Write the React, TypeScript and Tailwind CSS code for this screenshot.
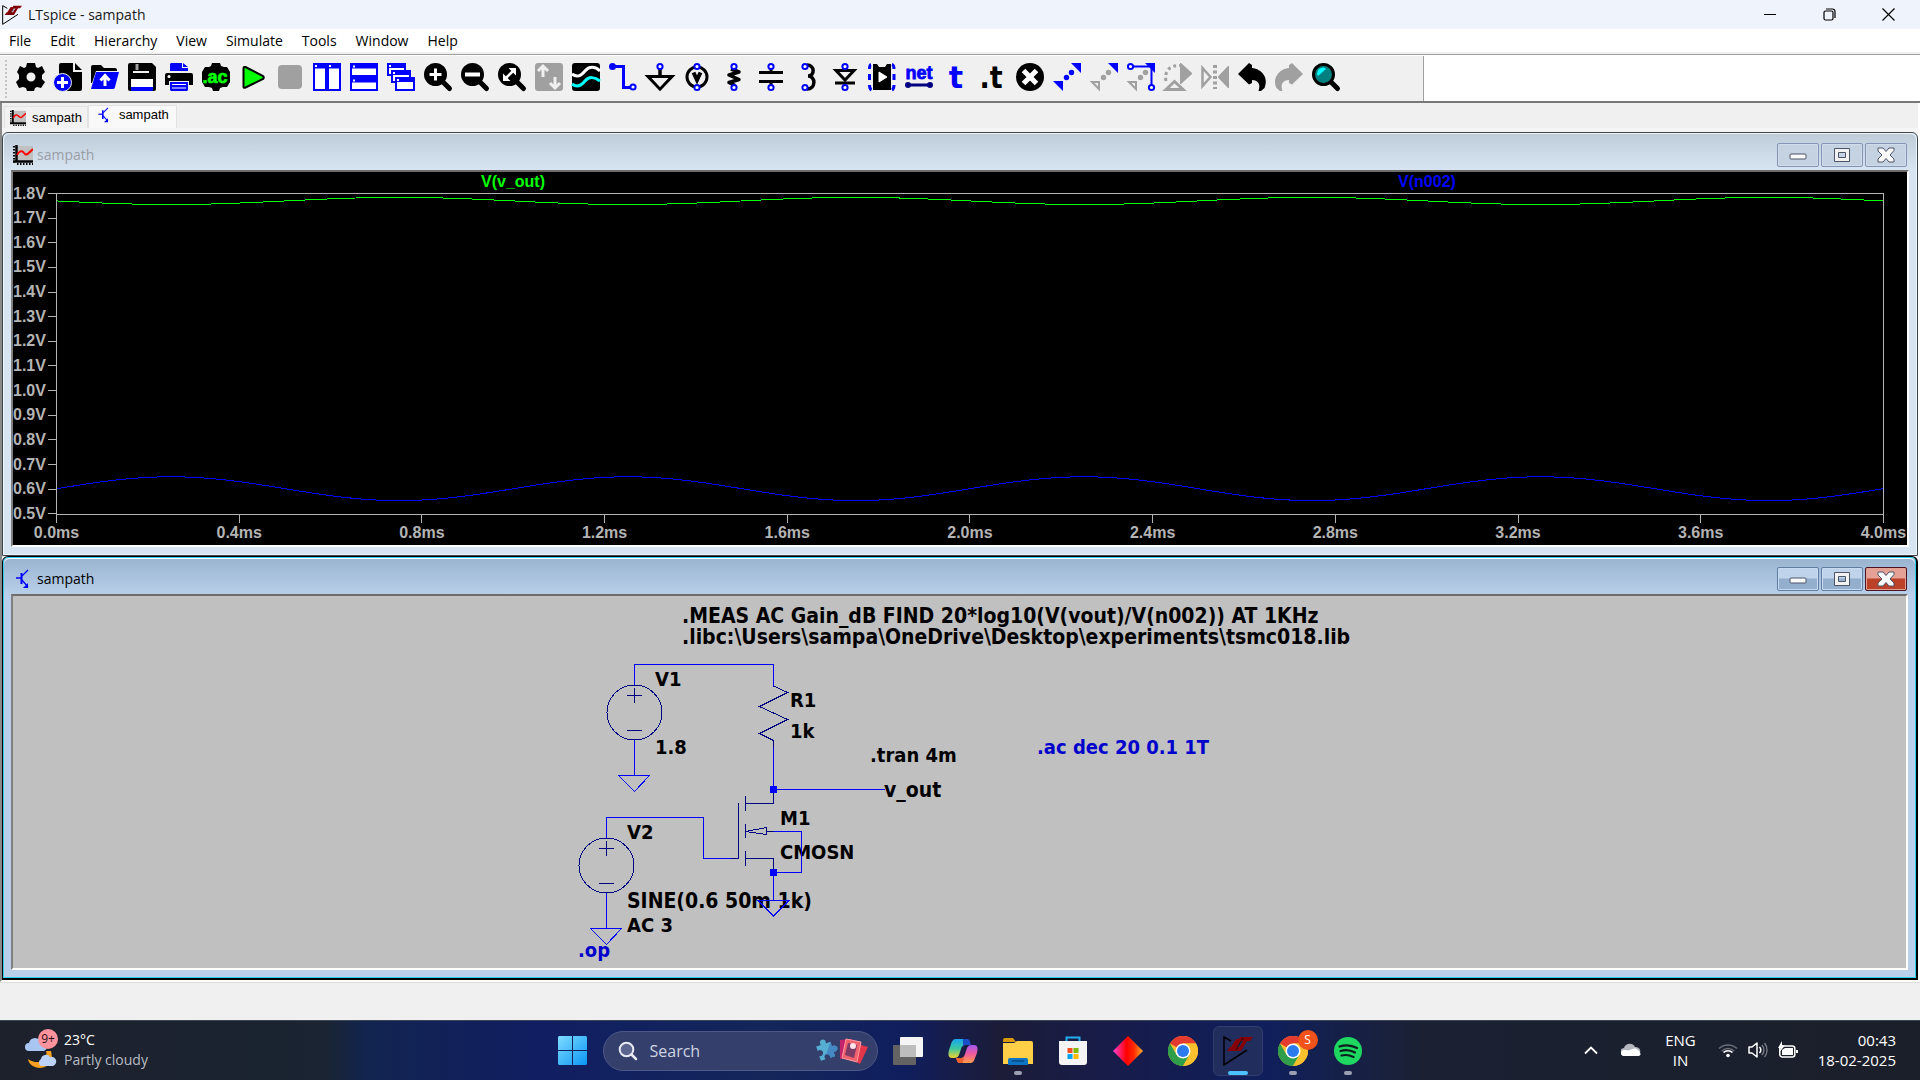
import type { ReactNode } from 'react';

const UI = "font-['Open_Sans','Noto_Sans',sans-serif]";

/* ---------- toolbar icons (28 x 28) ---------- */

const BLUE = '#0000ff';
const GRAY = '#a0a0a0';

function Ring({ x, y }: { x: number; y: number }) {
  return <circle cx={x} cy={y} r="2.6" fill="#fff" stroke={BLUE} strokeWidth="2" />;
}

function Lens({ fill = '#000' }: { fill?: string }) {
  return (
    <>
      <path d="M18 18 25.500 25.500" stroke="#000" strokeWidth="5" strokeLinecap="round" />
      <circle cx="11.500" cy="11.500" r="10" fill={fill} stroke="#000" strokeWidth="3" />
    </>
  );
}

const undoPath =
  'M0 11 L11 0 L14 2 L14 5 C24 6 31 15 26.500 25 L23 28 L20.500 28 C23 21 20 17 14 17 L14 20 L11 21.500 Z';

const tools: { name: string; icon: ReactNode }[] = [
  {
    name: 'Control panel',
    icon: (
      <path
        fillRule="evenodd"
        d="M10 0h8l1 4 2 1 4-2 3 6-3 3v4l3 3-4 6-4-1-2 1-1 3h-7l-1-3-3-1-4 1-3-6 3-3v-4L0 9l3-6 4 2 2-1zM14 9.500a4.500 4.500 0 1 0 0 9 4.500 4.500 0 0 0 0-9z"
      />
    ),
  },
  {
    name: 'New schematic',
    icon: (
      <>
        <path d="M7 0h12v9h9v17a2 2 0 0 1-2 2H5V2a2 2 0 0 1 2-2zM21 0l7 7h-7z" />
        <circle cx="8.500" cy="19.500" r="9" fill={BLUE} stroke="#f0f0f0" strokeWidth="1" />
        <path d="M8.500 14v11M3 19.500h11" stroke="#fff" strokeWidth="3" />
      </>
    ),
  },
  {
    name: 'Open',
    icon: (
      <>
        <path d="M0 4a2 2 0 0 1 2-2h8l3 3h11a2 2 0 0 1 2 2v1H5L1 20H0z" />
        <path d="M5 9h23l-4 15a2 2 0 0 1-2 2H0z" fill={BLUE} />
        <path d="M14 23v-8M9.500 17.500 14 12.500l4.500 5" stroke="#fff" strokeWidth="3" fill="none" />
      </>
    ),
  },
  {
    name: 'Save',
    icon: (
      <>
        <path d="M2 0h22l4 4v22a2 2 0 0 1-2 2H2a2 2 0 0 1-2-2V2a2 2 0 0 1 2-2z" />
        <path d="M5 0h16v10H5z" fill="#f0f0f0" />
        <path d="M5 0h16v8H5z" />
        <path d="M7.500 1h3v6h-3z" fill="#a0a0a0" />
        <path d="M3 16h22v8H3z" fill="#fff" />
        <path d="M3 24h22v4H3z" fill={BLUE} />
      </>
    ),
  },
  {
    name: 'Print',
    icon: (
      <>
        <path d="M5 8V1l1-1h11v5h6v3zM18 0l5 4h-5z" fill={BLUE} />
        <path d="M2 10h24a2 2 0 0 1 2 2v10h-4v-4H4v4H0V12a2 2 0 0 1 2-2z" />
        <circle cx="4" cy="13.500" r="1.500" fill="#fff" />
        <path d="M5 19h18v8l-1 1H6l-1-1z" fill={BLUE} />
        <path d="M7 21.500h14M7 25h14" stroke="#fff" strokeWidth="1" />
      </>
    ),
  },
  {
    name: 'Edit simulation command',
    icon: (
      <>
        <path d="M10 0h8l1 3 3 1 3 0 3 5v10l-3 5h-4l-3 1-1 3h-6l-1-3-3-1H3l-3-5V9l3-5h4l2-1z" />
        <text
          x="13"
          y="20"
          textAnchor="middle"
          className="font-['Liberation_Sans',Arial,sans-serif] text-[18px] font-bold"
          fill="#00ff00"
          stroke="#00ff00"
          strokeWidth="0.700"
        >
          .ac
        </text>
      </>
    ),
  },
  {
    name: 'Run',
    icon: <path d="M4.500 5.500v18q0 2 2 1L24 16q1.500-1.500 0-3L6.500 4q-2-.5-2 1.500z" fill="#00ff00" stroke="#000" strokeWidth="2" />,
  },
  { name: 'Halt', icon: <rect x="2" y="2" width="24" height="24" rx="4" fill={GRAY} /> },
  {
    name: 'Tile vertically',
    icon: (
      <g stroke={BLUE} strokeWidth="2" fill="#fff">
        <path d="M1 1h12v26H1zM15 1h12v26H15z" />
        <path d="M2 3h10M16 3h10" strokeWidth="5" />
        <path d="M2 3h2M16 3h2" stroke="#fff" />
      </g>
    ),
  },
  {
    name: 'Tile horizontally',
    icon: (
      <g stroke={BLUE} strokeWidth="2" fill="#fff">
        <path d="M1 1h26v12H1zM1 15h26v12H1z" />
        <path d="M2 3h24M2 17h24" strokeWidth="5" />
        <path d="M3 3.500h2M3 17.500h2" stroke="#fff" />
      </g>
    ),
  },
  {
    name: 'Cascade',
    icon: (
      <g stroke={BLUE} strokeWidth="2" fill="#fff">
        <path d="M1 1h17v11H1z" />
        <path d="M1 3h17" strokeWidth="4" />
        <path d="M5 8h18v11H5z" />
        <path d="M5 10h18" strokeWidth="4" />
        <path d="M9 15h18v12H9z" />
        <path d="M9 17h18" strokeWidth="4" />
        <path d="M2 3h2M6 10h2M10 17h2" stroke="#fff" />
      </g>
    ),
  },
  {
    name: 'Zoom in',
    icon: (
      <>
        <Lens />
        <path d="M11.500 5.500v12M5.500 11.500h12" stroke="#fff" strokeWidth="3" />
      </>
    ),
  },
  {
    name: 'Zoom out',
    icon: (
      <>
        <Lens />
        <path d="M4 11.500h15" stroke="#fff" strokeWidth="4" />
      </>
    ),
  },
  {
    name: 'Zoom to fit',
    icon: (
      <>
        <Lens />
        <path d="M8 15l7-7" stroke="#fff" strokeWidth="2.500" />
        <path d="M10.500 5h7.500v7.500zM5 10.500V18h7.500z" fill="#fff" />
      </>
    ),
  },
  {
    name: 'Autorange',
    icon: (
      <>
        <rect width="28" height="28" rx="3" fill={GRAY} />
        <path d="M8 14V4M3 8l5-5 5 5M20 14v10M15 20l5 5 5-5" stroke="#f0f0f0" strokeWidth="3" fill="none" />
      </>
    ),
  },
  {
    name: 'Pick visible traces',
    icon: (
      <>
        <rect width="28" height="28" rx="3" />
        <path d="M0 11c5 4 9 2 13-3s10-5 15 0" stroke="#fff" strokeWidth="3" fill="none" />
        <path d="M0 21c5 4 9 2 13-3s10-4 15 0" stroke="#00ffff" strokeWidth="3" fill="none" />
      </>
    ),
  },
  {
    name: 'Wire',
    icon: (
      <>
        <path d="M3 3.500h11.500v21H24" stroke={BLUE} strokeWidth="3" fill="none" />
        <circle cx="3.500" cy="3.500" r="3.500" fill={BLUE} />
        <Ring x={24} y={24} />
      </>
    ),
  },
  {
    name: 'Ground',
    icon: (
      <>
        <path d="M14 5v9M2 13.500h24L14 26z" stroke="#000" strokeWidth="3" fill="#f0f0f0" />
        <path d="M14 5v8" stroke="#000" strokeWidth="3" />
        <path d="M6 15h16l-8 9z" fill="#f0f0f0" />
        <Ring x={14} y={3.500} />
      </>
    ),
  },
  {
    name: 'Voltage source',
    icon: (
      <>
        <circle cx="14" cy="14" r="10" fill="none" stroke="#000" strokeWidth="3" />
        <path d="M10.500 9.500 14 17 17.500 9.500" stroke="#000" strokeWidth="4" fill="none" />
        <Ring x={14} y={3.500} />
        <Ring x={14} y={24.500} />
      </>
    ),
  },
  {
    name: 'Resistor',
    icon: (
      <>
        <path d="M11 6 19 9 9 12l10 4.500-10 3 6 3" stroke="#000" strokeWidth="3.500" fill="none" strokeLinejoin="round" />
        <Ring x={14} y={3.500} />
        <Ring x={14} y={24.500} />
      </>
    ),
  },
  {
    name: 'Capacitor',
    icon: (
      <>
        <path d="M2 9.500h24M2 18.500h24M14 5v4M14 19v5" stroke="#000" strokeWidth="3" />
        <Ring x={14} y={3.500} />
        <Ring x={14} y={24.500} />
      </>
    ),
  },
  {
    name: 'Inductor',
    icon: (
      <>
        <path d="M13 2c8 0 8 11 1 11c8 0 8 13-1 13" stroke="#000" strokeWidth="3.500" fill="none" />
        <Ring x={11} y={3.500} />
        <Ring x={11} y={24.500} />
      </>
    ),
  },
  {
    name: 'Diode',
    icon: (
      <>
        <path d="M5 7.500h18L14 17z" stroke="#000" strokeWidth="3" fill="#f0f0f0" />
        <path d="M4 20h20" stroke="#000" strokeWidth="3" />
        <Ring x={14} y={3.500} />
        <Ring x={14} y={24.500} />
      </>
    ),
  },
  {
    name: 'Component',
    icon: (
      <>
        <path d="M3 1.500Q1.500 2 1.500 6M1.500 11v6M1.500 22q0 4 2 5M24 1.500q2 .5 2 4.500M26 11v6M26 22q0 4-2 5" stroke={BLUE} strokeWidth="3" fill="none" />
        <path d="M5 1h4l2 3h6l2-3h4v26H5z" />
        <path d="M11 9v10l8-5z" fill="#fff" stroke="#fff" strokeWidth="1" />
      </>
    ),
  },
  {
    name: 'Label net',
    icon: (
      <>
        <text
          x="14"
          y="16"
          textAnchor="middle"
          className="font-['Liberation_Sans',Arial,sans-serif] text-[18px] font-bold"
          fill={BLUE}
          stroke={BLUE}
          strokeWidth="0.800"
        >
          net
        </text>
        <path d="M3 22h22" stroke="#000080" strokeWidth="3" />
        <circle cx="3" cy="22" r="3" fill="#000080" />
        <circle cx="25" cy="22" r="3" fill="#000080" />
      </>
    ),
  },
  {
    name: 'Text',
    icon: (
      <text x="14" y="25" textAnchor="middle" className="font-['DejaVu_Sans',sans-serif] text-[30px] font-bold" fill={BLUE}>
        t
      </text>
    ),
  },
  {
    name: 'SPICE directive',
    icon: (
      <text x="12" y="25" textAnchor="middle" className="font-['DejaVu_Sans_Condensed',sans-serif] text-[30px] font-bold">
        .t
      </text>
    ),
  },
  {
    name: 'Delete',
    icon: (
      <>
        <circle cx="14" cy="14" r="14" />
        <path d="M7.500 7.500l13 13M20.500 7.500l-13 13" stroke="#fff" strokeWidth="5" />
      </>
    ),
  },
  {
    name: 'Move',
    icon: (
      <g fill={BLUE}>
        <path d="M18 0h10v10zM0 18h10v10z" />
        <circle cx="18.500" cy="9.500" r="2.700" />
        <circle cx="13.500" cy="14.500" r="2.700" />
      </g>
    ),
  },
  {
    name: 'Drag',
    icon: (
      <>
        <path d="M18 0h10v10z" fill={BLUE} />
        <circle cx="18.500" cy="9.500" r="2.700" fill={GRAY} />
        <circle cx="13.500" cy="14.500" r="2.700" fill={GRAY} />
        <path d="M2 19h7v7z" fill="none" stroke={GRAY} strokeWidth="2" />
      </>
    ),
  },
  {
    name: 'Stretch',
    icon: (
      <>
        <path d="M4 3.500h20.500V24" fill="none" stroke={BLUE} strokeWidth="2" />
        <path d="M18 0h10v10z" fill={BLUE} />
        <circle cx="18.500" cy="9.500" r="2.700" fill={GRAY} />
        <circle cx="13.500" cy="14.500" r="2.700" fill={GRAY} />
        <path d="M2 19h7v7z" fill="none" stroke={GRAY} strokeWidth="2" />
        <Ring x={3.500} y={3.500} />
        <Ring x={24.500} y={24.500} />
      </>
    ),
  },
  {
    name: 'Rotate',
    icon: (
      <>
        <path d="M2 18C0 8 6 2 16 2.500" fill="none" stroke={GRAY} strokeWidth="3" strokeDasharray="3 3" />
        <path d="M16 0h1l11 10v1L17 21h-1z" fill={GRAY} />
        <path d="M2 26.500 10.500 18.500 19 26.500z" fill="#f0f0f0" stroke={GRAY} strokeWidth="3" />
      </>
    ),
  },
  {
    name: 'Mirror',
    icon: (
      <>
        <path d="M1.500 5v18l8-9z" fill="none" stroke={GRAY} strokeWidth="2.500" />
        <path d="M28 3v22h-1L17 14.500v-1L27 3z" fill={GRAY} />
        <path d="M14 2v24" stroke={GRAY} strokeWidth="4" strokeDasharray="3 2.500" />
      </>
    ),
  },
  { name: 'Undo', icon: <path d={undoPath} /> },
  { name: 'Redo', icon: <path d={undoPath} fill={GRAY} transform="translate(28 0) scale(-1 1)" /> },
  {
    name: 'Find',
    icon: (
      <>
        <Lens fill="#008080" />
        <path d="M5 11a6.500 6.500 0 0 1 7-6.500l2 1.500-8 7z" fill="#00ffff" />
      </>
    ),
  },
];

/* ---------- small shared icons ---------- */

function LtLogo({ className }: { className: string }) {
  return (
    <svg viewBox="0 0 30 30" className={className} aria-hidden="true">
      <path d="M8 5 1 1v28L24 14" fill="none" stroke="#000" strokeWidth="1.500" />
      <path d="M13 3h6l-5 8h4l-3 4H4l3-4h1zM17 1h13l-3 4h-3l-6 10h-4l6-10h-5z" fill="#860008" />
      <path d="M20 2 13 14" stroke="#000" strokeWidth="1" strokeDasharray="2 1" />
    </svg>
  );
}

function WaveIcon({ className }: { className: string }) {
  return (
    <svg viewBox="0 0 20 20" className={className} aria-hidden="true">
      <path d="M5 1h15v14H5z" fill="#c0c0c0" />
      <path d="M3.500 0v17M0 16.500h20" stroke="#000" strokeWidth="2.500" />
      <path d="M1 1v17M4 19h16" stroke="#000" strokeWidth="2" strokeDasharray="1.500 1.500" />
      <path d="M4 10c2-4 5-5 7-2s4 1 9-4" fill="none" stroke="#f00" strokeWidth="2" />
    </svg>
  );
}

function TransistorIcon({ className }: { className: string }) {
  return (
    <svg viewBox="0 0 16 20" className={className} aria-hidden="true">
      <path d="M1 9h5" fill="none" stroke={BLUE} strokeWidth="1.500" />
      <path d="M6.500 4v11" stroke={BLUE} strokeWidth="2" />
      <path d="M7 7 13 1M7 11l6 7" fill="none" stroke={BLUE} strokeWidth="1.300" />
      <path d="M13 14v5H8z" fill={BLUE} />
    </svg>
  );
}

/* ---------- child windows ---------- */

function CaptionButtons({ active }: { active: boolean }) {
  const plain = active
    ? 'flex h-6 w-[42px] items-center justify-center rounded-[2px] border border-[#5f7da3] bg-linear-to-b from-[#bfd3ea] from-45% to-[#94aece] to-50% inset-ring inset-ring-[#c9dbf0]'
    : 'flex h-6 w-[42px] items-center justify-center rounded-[2px] border border-[#8494b5] bg-[#c4d2e2] inset-ring inset-ring-[#d0dcea]';
  const close = active
    ? 'flex h-6 w-[42px] items-center justify-center rounded-[2px] border border-[#4b1420] bg-linear-to-b from-[#e5a196] from-45% to-[#bc4129] to-50% inset-ring inset-ring-[#e3a296]'
    : plain;
  return (
    <div className="flex gap-0.5">
      <button aria-label="Minimize" className={plain}>
        <svg width="20" height="18" viewBox="0 0 20 18">
          <rect x="2" y="8" width="16" height="5" rx="1" fill="#fafafa" stroke="#4c5468" />
        </svg>
      </button>
      <button aria-label="Restore" className={plain}>
        <svg width="20" height="18" viewBox="0 0 20 18">
          <path fillRule="evenodd" d="M2.500 2.500h15v13h-15zM6.500 6.500v5h7v-5z" fill="#f2f2f2" stroke="#4c5468" />
        </svg>
      </button>
      <button aria-label="Close" className={close}>
        <svg width="20" height="18" viewBox="0 0 20 18">
          <path d="M2 2h5l3 3.500L13 2h5v2.500L14 9l4 4v3h-5l-3-3.500L7 16H2v-3l4-4-4-4z" fill="#fafafa" stroke="#4c5468" strokeLinejoin="round" />
        </svg>
      </button>
    </div>
  );
}

function ChildWindow({ active, icon, children }: { active: boolean; icon: ReactNode; children: ReactNode }) {
  return (
    <section
      className={
        active
          ? 'flex grow basis-0 flex-col rounded-t-md border-t border-r-2 border-b-2 border-l border-black bg-[#bad0ea] px-2 pb-2 inset-ring inset-ring-[#2bd0f0]'
          : 'flex grow basis-0 flex-col rounded-t-md border border-[#3f474c] bg-[#d7e4f2] px-2 pb-2 inset-ring inset-ring-[#eef3f8]'
      }
    >
      <header
        className={
          active
            ? 'mx-[-7px] mt-px flex h-9 items-center justify-between rounded-t-md border-t border-white bg-linear-to-b from-[#9ab4d0] to-[#b8cfe9] pt-[5px] pr-2 pl-[9px]'
            : 'mx-[-7px] mt-px flex h-9 items-center justify-between rounded-t-md bg-linear-to-b from-[#bfcddb] to-[#d7e4f2] px-[9px] pt-[6px]'
        }
      >
        <div className={active ? 'flex items-center gap-1 text-sm text-black' : 'flex items-center gap-1 text-sm text-[#9a9fa6]'}>
          {icon}
          <h2>sampath</h2>
        </div>
        <CaptionButtons active={active} />
      </header>
      <div className="flex flex-1 flex-col border-2 border-t-[#706c6c] border-r-white border-b-white border-l-[#808080]">{children}</div>
    </section>
  );
}

/* ---------- waveform plot ---------- */

function sine(center: number, amplitude: number) {
  let d = '';
  for (let x = 0; x <= 1828; x += 4) {
    const y = center - amplitude * Math.sin((2 * Math.PI * x) / 457);
    d += `${x === 0 ? 'M' : 'L'}${x} ${y.toFixed(2)}`;
  }
  return d;
}

const volts = ['1.8V', '1.7V', '1.6V', '1.5V', '1.4V', '1.3V', '1.2V', '1.1V', '1.0V', '0.9V', '0.8V', '0.7V', '0.6V', '0.5V'];
const times = ['0.0ms', '0.4ms', '0.8ms', '1.2ms', '1.6ms', '2.0ms', '2.4ms', '2.8ms', '3.2ms', '3.6ms', '4.0ms'];

function Plot() {
  return (
    <div className="grid flex-1 grid-cols-[43px_1fr] grid-rows-[21px_1fr_30px] bg-black pr-[23px] font-['Liberation_Sans',Arial,sans-serif] text-base leading-5 font-bold text-[#b4b4b4]">
      <div className="col-start-2 grid grid-cols-2 text-center">
        <span className="text-[#00ff00]">V(v_out)</span>
        <span className="text-[#0000ff]">V(n002)</span>
      </div>
      <div className="col-start-1 flex flex-col justify-between">
        {volts.map((v) => (
          <div key={v} className="flex h-px items-center justify-between">
            <span>{v}</span>
            <span className="h-px w-2 bg-[#b4b4b4]" />
          </div>
        ))}
      </div>
      <div className="relative border border-[#b4b4b4]">
        <svg viewBox="0 0 1828 322" preserveAspectRatio="none" className="absolute inset-0 size-full" shapeRendering="crispEdges" fill="none">
          <path d={sine(7, -3.6)} stroke="#00ff00" strokeWidth="1" vectorEffect="non-scaling-stroke" />
          <path d={sine(297, 12)} stroke="#0000ff" strokeWidth="1" vectorEffect="non-scaling-stroke" />
        </svg>
      </div>
      <div className="col-start-2 flex justify-between">
        {times.map((t) => (
          <div key={t} className="flex w-px flex-col items-center">
            <span className="h-2 w-px bg-[#b4b4b4]" />
            <span>{t}</span>
          </div>
        ))}
      </div>
    </div>
  );
}

/* ---------- schematic ---------- */

function VoltageSource({ x, y }: { x: number; y: number }) {
  return (
    <g transform={`translate(${x} ${y})`}>
      <circle cx="0" cy="0" r="27.500" stroke="#000080" />
      <path d="M-7.500-17H7.500M0-24.500V-9.500M-7.500 18H7.500" stroke="#000080" />
      <path d="M0 27.500V63" />
      <path d="M-16 63H15L0 79z" />
    </g>
  );
}

const labels: { x: number; y: number; text: string; blue?: boolean; large?: boolean }[] = [
  { x: 682, y: 623, text: '.MEAS AC Gain_dB FIND 20*log10(V(vout)/V(n002)) AT 1KHz', large: true },
  { x: 682, y: 644, text: '.libc:\\Users\\sampa\\OneDrive\\Desktop\\experiments\\tsmc018.lib', large: true },
  { x: 655, y: 686, text: 'V1' },
  { x: 655, y: 754, text: '1.8' },
  { x: 790, y: 707, text: 'R1' },
  { x: 790, y: 738, text: '1k' },
  { x: 870, y: 762, text: '.tran 4m' },
  { x: 1037, y: 754, text: '.ac dec 20 0.1 1T', blue: true },
  { x: 884, y: 797, text: 'v_out', large: true },
  { x: 780, y: 825, text: 'M1' },
  { x: 780, y: 859, text: 'CMOSN' },
  { x: 627, y: 839, text: 'V2' },
  { x: 627, y: 908, text: 'SINE(0.6 50m 1k)', large: true },
  { x: 627, y: 932, text: 'AC 3' },
  { x: 578, y: 957, text: '.op', blue: true },
];

function Schematic() {
  return (
    <div className="flex flex-1 bg-[#c0c0c0]">
      <svg className="min-h-[365px] w-full" aria-label="Common source amplifier schematic">
        <g transform="translate(-13 -596)">
          <g className="font-['DejaVu_Sans_Condensed','Noto_Sans',sans-serif] font-bold">
            {labels.map((l) => (
              <text key={l.text} x={l.x} y={l.y} fill={l.blue ? '#0000cc' : '#000'} className={l.large ? 'text-[21px]' : 'text-[20px]'}>
                {l.text}
              </text>
            ))}
          </g>
          <g fill="none" stroke="#0000ff" strokeWidth="1" shapeRendering="crispEdges">
            <VoltageSource x={634.5} y={712.5} />
            <VoltageSource x={606.5} y={865.5} />
            <path d="M634.500 685V664.500H773.500V686" />
            <path d="M606.500 838V817.500H703.500V858.500H731" />
            <path d="M773.500 686 787.500 692.500 759.500 706.500 787.500 719.500 759.500 733.500 773.500 740.500V747" stroke="#000080" />
            <path d="M773.500 747V789.500H885" />
            <path d="M773.500 789.500V803.500H745.500M745.500 796V811M738.500 803V858.500H731M745.500 824V838M745.500 831.500 766.500 827.500V834.500L745.500 831.500M766.500 831.500H774M745.500 851V866M745.500 858.500H773.500V872" stroke="#000080" />
            <path d="M774 831.500H801.500V872.500H773.500V900.500M758 900.500H789L773.500 916z" />
            <path d="M770 786h7v7h-7zM770 869h7v7h-7z" fill="#0000ff" stroke="none" />
          </g>
        </g>
      </svg>
    </div>
  );
}

/* ---------- taskbar ---------- */

function Chrome() {
  return (
    <svg viewBox="0 0 30 30" className="size-[30px]" aria-hidden="true">
      <circle cx="15" cy="15" r="15" fill="#fbc02d" />
      <path d="M15 15 2 7.500A15 15 0 0 1 28 7.500H15z" fill="#e53a2f" />
      <path d="M15 15 8.500 18.800 2 7.500A15 15 0 0 0 15 30l6.500-11.200z" fill="#2f9e4a" />
      <path d="M15 7.500h13A15 15 0 0 1 15 30l6.500-11.200z" fill="#fbc02d" />
      <circle cx="15" cy="15" r="7.500" fill="#fff" />
      <circle cx="15" cy="15" r="6" fill="#2b7bee" />
    </svg>
  );
}

const apps: { name: string; icon: ReactNode; state?: 'open' | 'active'; badge?: string }[] = [
  {
    name: 'Task view',
    icon: (
      <svg viewBox="0 0 30 30" className="size-[30px]">
        <rect x="0" y="9" width="23" height="20" rx="1" fill="#636363" />
        <rect x="7" y="1" width="23" height="20" rx="1" fill="#f5f5f5" />
        <path d="M7 9h16v12H7z" fill="#bdbdbd" />
      </svg>
    ),
  },
  {
    name: 'Copilot',
    icon: (
      <svg viewBox="0 0 30 30" className="size-[30px]">
        <defs>
          <linearGradient id="cpa" x1="0" y1="0" x2="0" y2="1">
            <stop offset="0" stopColor="#18a5f0" />
            <stop offset="0.5" stopColor="#3cc8a0" />
            <stop offset="1" stopColor="#f2d22e" />
          </linearGradient>
          <linearGradient id="cpb" x1="0" y1="0" x2="0" y2="1">
            <stop offset="0" stopColor="#a558f0" />
            <stop offset="0.5" stopColor="#f05a9c" />
            <stop offset="1" stopColor="#ff9d4a" />
          </linearGradient>
        </defs>
        <path d="M8 3h10c3 0 3 3 4 6h-5c-2 0-3 1-4 4l-2 6c-1 2-2 3-5 3H4c-4 0-4-4-3-8l2-6c1-3 2-5 5-5z" fill="url(#cpa)" />
        <path d="M15 3h4c3 0 3 3 4 6h-5c-1 0-2 0-3 2z" fill="#1a4fc8" />
        <path d="M22 27H12c-3 0-3-3-4-5h5c2 0 3-1 4-4l2-6c1-2 2-3 5-3h2c4 0 4 4 3 8l-2 5c-1 3-2 5-5 5z" fill="url(#cpb)" />
        <path d="M15 27h-3c-3 0-3-3-4-5h5c1 0 2 0 3-2z" fill="#f0602e" />
      </svg>
    ),
  },
  {
    name: 'File Explorer',
    state: 'open',
    icon: (
      <svg viewBox="0 0 30 30" className="size-[30px]">
        <path d="M0 4a2 2 0 0 1 2-2h8l3 4H0z" fill="#d99a05" />
        <path d="M0 7h11l3-2h14a2 2 0 0 1 2 2v21H0z" fill="#ffcf48" />
        <path d="M5 29v-5a2 2 0 0 1 2-2h16a2 2 0 0 1 2 2v5z" fill="#0d74c4" />
        <path d="M9 25h12" stroke="#0a4a86" strokeWidth="1.500" />
      </svg>
    ),
  },
  {
    name: 'Microsoft Store',
    icon: (
      <svg viewBox="0 0 30 30" className="size-[30px]">
        <path d="M8.500 6V1.500h13V6" fill="none" stroke="#23aef0" strokeWidth="2" />
        <path d="M1 5h28v21a3 3 0 0 1-3 3H4a3 3 0 0 1-3-3z" fill="#f4f4f4" />
        <path d="M9.500 12h5v5h-5z" fill="#f25022" />
        <path d="M15.500 12h5v5h-5z" fill="#7fba00" />
        <path d="M9.500 18h5v5h-5z" fill="#00a4ef" />
        <path d="M15.500 18h5v5h-5z" fill="#ffb900" />
      </svg>
    ),
  },
  {
    name: 'Diamond',
    icon: (
      <svg viewBox="0 0 30 30" className="size-[30px]">
        <defs>
          <linearGradient id="dia">
            <stop offset="0" stopColor="#ff40d8" />
            <stop offset="0.450" stopColor="#ff0000" />
            <stop offset="0.700" stopColor="#ff2a00" />
            <stop offset="1" stopColor="#ffb030" />
          </linearGradient>
        </defs>
        <path d="M15 0 30 15 15 30 0 15z" fill="url(#dia)" />
      </svg>
    ),
  },
  { name: 'Google Chrome', icon: <Chrome /> },
  { name: 'LTspice', state: 'active', icon: <LtLogo className="size-[30px]" /> },
  { name: 'Google Chrome, profile S', state: 'open', badge: 'S', icon: <Chrome /> },
  {
    name: 'Spotify',
    state: 'open',
    icon: (
      <svg viewBox="0 0 28 28" className="size-7">
        <circle cx="14" cy="14" r="14" fill="#1ed760" />
        <path d="M5.500 9.500c6-2 12-1.500 17.500 1.500M6.500 14c5-1.500 10-1 14.500 1.500M7.500 18.500c4-1 8-.5 12 1.500" fill="none" stroke="#0c1d1d" strokeWidth="2.200" strokeLinecap="round" />
      </svg>
    ),
  },
];

function Taskbar() {
  return (
    <footer className="grid h-[60px] grid-cols-[1fr_auto_1fr] items-center border-t border-[#3a4654] bg-[linear-gradient(90deg,#1d212c_0%,#1a2432_17%,#12244f_19%,#111e62_28%,#14265a_40%,#101e5e_47%,#1c1c38_52%,#171c4a_58%,#101f5c_66%,#1b2133_74%,#1b1f2a_100%)] text-sm text-white">
      <button className="flex items-center gap-1.5 pb-0.5 pl-6 text-left">
        <span className="relative">
          <svg width="34" height="38" viewBox="0 0 34 38" aria-hidden="true">
            <path d="M4 19a4 4 0 0 1 0-8 6 6 0 0 1 11-2 5 5 0 0 1 4 10z" fill="#a9c6f2" transform="translate(1 1)" />
            <path d="M22 20c3 9-8 15-18 8 1 8 13 12 20 6 5-4 4-10 3-14z" fill="#f5a01e" />
            <path d="M17 35a4 4 0 0 1 0-7 5 5 0 0 1 9-2 4.500 4.500 0 0 1 3 9z" fill="#bcd3f7" />
          </svg>
          <span className="absolute -top-0.5 right-0 flex size-5 items-center justify-center rounded-full bg-[#ff929c] text-xs text-[#2a1015]">9+</span>
        </span>
        <span className="leading-5">
          <span className="block">23°C</span>
          <span className="block text-[#b9bcc2]">Partly cloudy</span>
        </span>
      </button>

      <nav className="flex items-center gap-[5px]" aria-label="Taskbar">
        <button aria-label="Start" className="flex size-[50px] items-center justify-center">
          <svg viewBox="0 0 29 29" className="size-[29px]">
            <defs>
              <linearGradient id="win" x1="0" y1="0" x2="1" y2="1">
                <stop offset="0" stopColor="#7fdcff" />
                <stop offset="1" stopColor="#0a96f5" />
              </linearGradient>
            </defs>
            <path d="M1 0h13v14H0V1zM15 0h13l1 1v13H15zM0 15h14v14H1l-1-1zM15 15h14v13l-1 1H15z" fill="url(#win)" />
          </svg>
        </button>
        <label className="flex h-10 w-[275px] items-center rounded-full border border-[#4d5886] bg-[#343f6b] pr-2 pl-3.5">
          <svg width="20" height="20" viewBox="0 0 20 20" aria-hidden="true">
            <circle cx="8.500" cy="8.500" r="6.800" fill="#5b6590" stroke="#e8eaf2" strokeWidth="2" />
            <path d="M13.500 13.500 18 18" stroke="#e8eaf2" strokeWidth="2.500" strokeLinecap="round" />
          </svg>
          <input type="text" aria-label="Search" placeholder="Search" className="ml-3 w-0 flex-1 bg-transparent text-base text-white outline-none placeholder:text-[#d0d4e2]" />
          <svg width="54" height="30" viewBox="0 0 54 30" aria-hidden="true">
            <g transform="rotate(-18 10 15)">
              <path d="M3 8h5a3 3 0 1 1 5 0h5v5a3 3 0 1 1 0 5v5h-5a3 3 0 1 0-5 0H3v-5a3 3 0 1 0 0-5z" fill="#56aed2" />
              <path d="M18 8v5a3 3 0 1 1 0 5v5h-5a3 3 0 0 0-3-4z" fill="#4488c4" />
            </g>
            <path d="M25 4l12-1 4 18-16 2z" fill="#c4246c" />
            <path d="M43 8l10 3-8 17-10-5z" fill="#e2364b" />
            <path d="M31 3l15 3-4 20-15-4z" fill="#f0616e" stroke="#ff9a9f" strokeWidth="1" />
            <path d="M33 7l9 2-3 13-9-3z" fill="#7c3a66" />
            <circle cx="38" cy="10" r="3" fill="#ffe3e6" />
          </svg>
        </label>
        {apps.map((a) => (
          <button
            key={a.name}
            aria-label={a.name}
            className={
              a.state === 'active'
                ? 'relative flex size-[50px] items-center justify-center rounded-md border border-[#303c6c] bg-[#212d5c]'
                : 'relative flex size-[50px] items-center justify-center'
            }
          >
            {a.icon}
            {a.badge && (
              <span className="absolute top-1 right-0 flex size-5 items-center justify-center rounded-full bg-[#f1511b] text-xs text-white">{a.badge}</span>
            )}
            {a.state === 'open' && <span className="absolute bottom-px h-1 w-2 rounded-full bg-[#9a9fb2]" />}
            {a.state === 'active' && <span className="absolute bottom-0 h-1 w-5 rounded-full bg-[#4cc2ff]" />}
          </button>
        ))}
      </nav>

      <div className="flex items-center justify-end pr-6 pb-0.5">
        <button aria-label="Show hidden icons" className="mr-[22px]">
          <svg width="16" height="16" viewBox="0 0 16 16">
            <path d="M2 11.500 8 5.500l6 6" fill="none" stroke="#fff" strokeWidth="1.800" />
          </svg>
        </button>
        <button aria-label="OneDrive" className="mr-6">
          <svg width="20" height="14" viewBox="0 0 20 14">
            <path d="M4 13a4 4 0 0 1-1-8 6 6 0 0 1 11-1 4.500 4.500 0 0 1 5 6z" fill="#b4b7bd" />
            <path d="M3 13c-4 0-4-6 0-6 3 0 4 1 6 0s5-3 8 0 4 6-1 6z" fill="#fff" />
          </svg>
        </button>
        <button className="mr-[22px] text-center text-[15px] leading-5">
          <span className="block">ENG</span>
          <span className="block">IN</span>
        </button>
        <button aria-label="Network, volume, battery" className="mr-5 flex items-center gap-2.5">
          <svg width="20" height="16" viewBox="0 0 20 16" fill="none">
            <path d="M1 6.500a13 13 0 0 1 18 0M3.800 9a9 9 0 0 1 12.400 0" stroke="#6a6f79" strokeWidth="1.500" />
            <path d="M5.500 10.500a6.500 6.500 0 0 1 9 0" stroke="#fff" strokeWidth="1.500" />
            <circle cx="10" cy="13.500" r="1.800" fill="#fff" />
          </svg>
          <svg width="20" height="18" viewBox="0 0 20 18" fill="none">
            <path d="M1 6h3l5-4v14l-5-4H1z" stroke="#fff" strokeWidth="1.500" strokeLinejoin="round" />
            <path d="M11.500 6a4.500 4.500 0 0 1 0 6" stroke="#fff" strokeWidth="1.500" />
            <path d="M14 4a7.500 7.500 0 0 1 0 10M16.500 2a11 11 0 0 1 0 14" stroke="#7a7f89" strokeWidth="1.300" />
          </svg>
          <svg width="20" height="18" viewBox="0 0 20 18">
            <rect x="1.800" y="5" width="15" height="11" rx="2.500" fill="none" stroke="#fff" strokeWidth="1.500" />
            <path d="M4 9l3-2h8v7H4zM18 9h2v3h-2z" fill="#fff" />
            <path d="M4 0 0 7h2.500L1.500 11 7 4.500H4z" fill="#fff" />
          </svg>
        </button>
        <button className="text-right text-[15px] leading-5">
          <span className="block">00:43</span>
          <span className="block">18-02-2025</span>
        </button>
      </div>
    </footer>
  );
}

/* ---------- page ---------- */

const menus = ['File', 'Edit', 'Hierarchy', 'View', 'Simulate', 'Tools', 'Window', 'Help'];

export default function App() {
  return (
    <div className={`flex min-h-screen flex-col bg-[#f0f0f0] ${UI}`}>
      <header className="flex h-[29px] items-center justify-between bg-[#eff3fb] text-sm text-[#1a1a1a]">
        <div className="flex items-center gap-1.5 pl-0.5">
          <LtLogo className="size-5" />
          <h1>LTspice - sampath</h1>
        </div>
        <div className="flex items-center gap-[46px] pr-[25px]">
          <button aria-label="Minimize">
            <svg width="13" height="13" viewBox="0 0 13 13">
              <path d="M0 6.500h12" stroke="#000" />
            </svg>
          </button>
          <button aria-label="Restore">
            <svg width="13" height="13" viewBox="0 0 13 13" fill="none" stroke="#000" strokeWidth="1.200">
              <rect x="1" y="3" width="9" height="9" rx="1.500" />
              <path d="M3 1h6.500a2.500 2.500 0 0 1 2.500 2.500V10" />
            </svg>
          </button>
          <button aria-label="Close">
            <svg width="13" height="13" viewBox="0 0 13 13">
              <path d="M.5.5l12 12M12.500.5l-12 12" stroke="#000" strokeWidth="1.200" />
            </svg>
          </button>
        </div>
      </header>

      <nav className="flex h-[25px] items-center gap-[19px] border-b-2 border-[#f0f0f0] bg-white pl-[9px] text-sm text-black" aria-label="Menu">
        {menus.map((m) => (
          <button key={m}>{m}</button>
        ))}
      </nav>

      <div className="flex h-[49px] border-t border-b-2 border-t-[#a0a0a0] border-b-[#787878] bg-white">
        <div className="mt-px flex items-center border-r border-[#a0a0a0] bg-[#f0f0f0] pr-[83px] pl-[5px]" role="toolbar" aria-label="Toolbar">
          <span className="mr-2.5 h-[38px] border-l-2 border-dotted border-[#c4c4c4]" />
          <div className="flex gap-[9px] pb-[3px]">
            {tools.map((t) => (
              <button key={t.name} aria-label={t.name}>
                <svg width="28" height="28" viewBox="0 0 28 28" className="block overflow-visible">
                  {t.icon}
                </svg>
              </button>
            ))}
          </div>
        </div>
      </div>

      <main className="flex flex-1 flex-col border-r-2 border-b-2 border-l-2 border-r-white border-b-white border-l-[#8a8a8a]">
        <div role="tablist" className="flex h-[29px] items-end border-b-4 border-[#f5f5f5] pl-0.5 font-['Liberation_Sans',Arial,sans-serif] text-[13px] text-black">
          <button role="tab" aria-selected="false" className="flex h-[22px] items-center gap-1.5 border border-b-0 border-[#e2e2e2] bg-[#f2f2f2] px-[5px]">
            <WaveIcon className="size-4" />
            sampath
          </button>
          <button role="tab" aria-selected="true" className="flex h-[23px] items-center gap-2 border border-b-0 border-[#e2e2e2] bg-[#f9f9f9] pr-[7px] pb-1 pl-2">
            <TransistorIcon className="h-4 w-[14px]" />
            sampath
          </button>
        </div>
        <ChildWindow active={false} icon={<WaveIcon className="size-5" />}>
          <Plot />
        </ChildWindow>
        <ChildWindow active icon={<TransistorIcon className="h-5 w-5" />}>
          <Schematic />
        </ChildWindow>
      </main>

      <div className="h-[38px] border-t border-[#dcdcdc]" role="status" />
      <Taskbar />
    </div>
  );
}
